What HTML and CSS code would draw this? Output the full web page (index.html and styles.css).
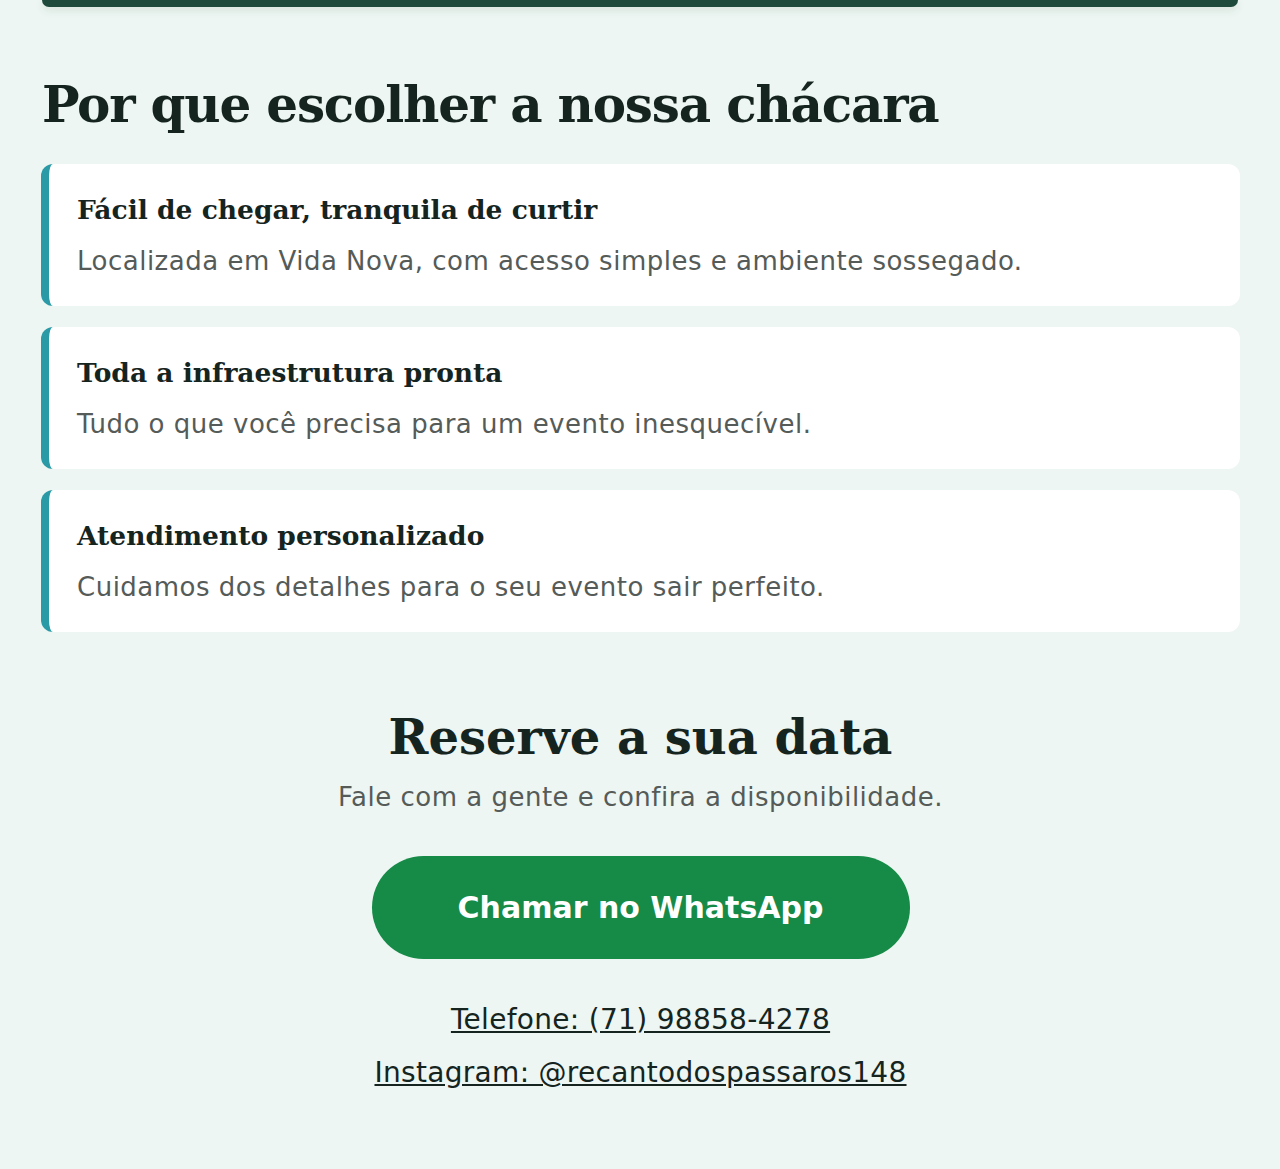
FILE: index.html
```html
<!DOCTYPE html>
<html lang="pt-BR">
<head>
<meta charset="utf-8">
<title>Recanto dos Pássaros</title>
<link rel="stylesheet" href="styles.css">
</head>
<body>
<div class="hero-end"></div>
<main class="page">
  <section class="why">
    <h2 class="section-title">Por que escolher a nossa chácara</h2>
    <div class="cards">
      <article class="card">
        <h3 class="card-title">Fácil de chegar, tranquila de curtir</h3>
        <p class="card-text">Localizada em Vida Nova, com acesso simples e ambiente sossegado.</p>
      </article>
      <article class="card">
        <h3 class="card-title">Toda a infraestrutura pronta</h3>
        <p class="card-text">Tudo o que você precisa para um evento inesquecível.</p>
      </article>
      <article class="card">
        <h3 class="card-title">Atendimento personalizado</h3>
        <p class="card-text">Cuidamos dos detalhes para o seu evento sair perfeito.</p>
      </article>
    </div>
  </section>
  <section class="contact">
    <h2 class="contact-title">Reserve a sua data</h2>
    <p class="contact-sub">Fale com a gente e confira a disponibilidade.</p>
    <a class="btn-whatsapp" href="#">Chamar no WhatsApp</a>
    <p class="contact-link"><a href="#">Telefone: (71) 98858-4278</a></p>
    <p class="contact-link"><a href="#">Instagram: @recantodospassaros148</a></p>
  </section>
</main>
</body>
</html>
```
FILE: styles.css
```css
* { box-sizing: border-box; }
body {
  margin: 0;
  background: #edf6f2;
  color: #15241e;
  font-family: "DejaVu Sans", "Noto Sans", sans-serif;
}
.hero-end {
  height: 7px;
  margin: 0 42px;
  background: #1d4a3a;
  border-radius: 0 0 12px 12px;
  box-shadow: 0 3px 8px rgba(29, 74, 58, 0.12);
}
.page {
  padding: 0 40px 60px 41px;
}
.section-title {
  font-family: "DejaVu Serif", serif;
  font-weight: 700;
  font-size: 50px;
  line-height: 1.2;
  margin: 68px 0 29px 1px;
  color: #15241e;
  letter-spacing: -1.2px;
}
.cards {
  display: flex;
  flex-direction: column;
  gap: 21px;
}
.card {
  background: #ffffff;
  border-left: 8px solid #2a9aa6;
  border-radius: 12px;
  padding: 29px 28px 22px 28px;
  min-height: 142px;
}
.card-title {
  font-family: "DejaVu Serif", serif;
  font-weight: 700;
  font-size: 26.5px;
  line-height: 1.3;
  margin: 0 0 16px;
  color: #15241e;
}
.card-text {
  font-size: 26px;
  letter-spacing: 0.5px;
  line-height: 1.4;
  margin: 0;
  color: #555b58;
}
.contact {
  text-align: center;
  padding-top: 77px;
}
.contact-title {
  font-family: "DejaVu Serif", serif;
  font-weight: 700;
  font-size: 48px;
  line-height: 1.2;
  margin: 0 0 14px;
  color: #15241e;
}
.contact-sub {
  font-size: 26px;
  letter-spacing: 0.5px;
  line-height: 1.3;
  margin: 0 0 42px;
  color: #555b58;
}
.btn-whatsapp {
  display: inline-block;
  width: 538px;
  padding: 30px 0;
  border-radius: 52px;
  background: #168a47;
  color: #ffffff;
  font-weight: 700;
  font-size: 30px;
  line-height: 43px;
  text-decoration: none;
  margin-bottom: 41px;
}
.contact-link {
  margin: 0 0 13px;
  font-size: 28px;
  letter-spacing: 0.3px;
  line-height: 40px;
}
.contact-link a {
  color: #15241e;
}
```
